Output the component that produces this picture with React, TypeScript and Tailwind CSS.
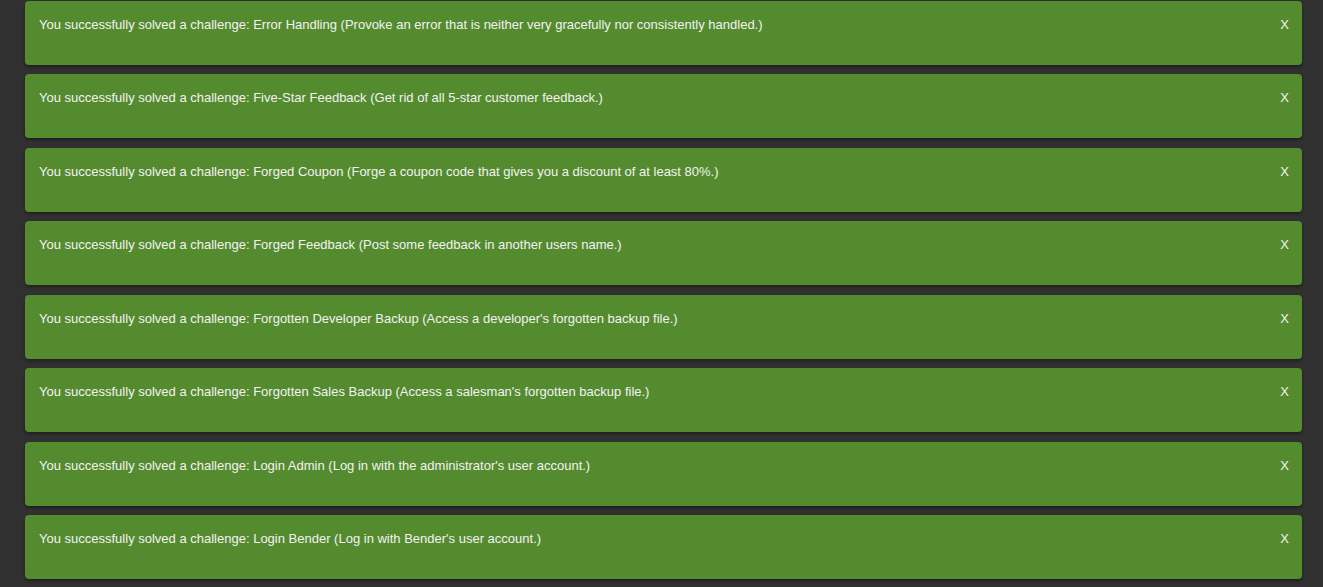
import React from "react";

const items = [
  "Error Handling (Provoke an error that is neither very gracefully nor consistently handled.)",
  "Five-Star Feedback (Get rid of all 5-star customer feedback.)",
  "Forged Coupon (Forge a coupon code that gives you a discount of at least 80%.)",
  "Forged Feedback (Post some feedback in another users name.)",
  "Forgotten Developer Backup (Access a developer's forgotten backup file.)",
  "Forgotten Sales Backup (Access a salesman's forgotten backup file.)",
  "Login Admin (Log in with the administrator's user account.)",
  "Login Bender (Log in with Bender's user account.)",
];

export default function App() {
  return (
    <div
      className="min-h-screen w-full bg-[#303030] pt-[1px]"
      style={{ fontFamily: '"Liberation Sans", Arial, sans-serif' }}
    >
      <div className="ml-[25px] w-[1277px] flex flex-col gap-[9.43px]">
        {items.map((t) => (
          <div
            key={t}
            className="h-[64px] rounded-[4px] bg-[#558b2f] shadow-[0_2px_3px_rgba(0,0,0,0.35)] flex justify-between items-start pl-[14px] pr-[13px] pt-[16px] text-[13px] leading-[16px] text-[#f2f2f2]"
          >
            <span>You successfully solved a challenge: {t}</span>
            <span>X</span>
          </div>
        ))}
      </div>
    </div>
  );
}
